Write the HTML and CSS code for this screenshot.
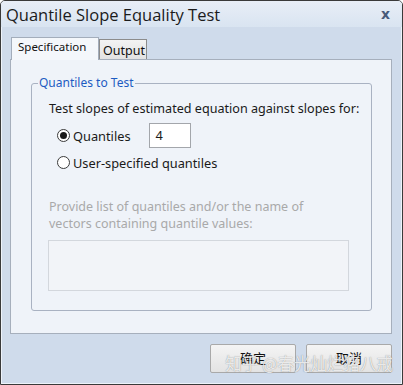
FILE: index.html
```html
<!DOCTYPE html>
<html>
<head lang="en">
    <meta charset="UTF-8">
    <title>Quantile Slope Equality Test</title>
    <link rel="stylesheet" href="styles.css">
</head>
<body>
    <div id="dialog">
        <div class="titlebar">
            <span class="title">Quantile Slope Equality Test</span>
            <span class="close">x</span>
        </div>
        <div class="body">
            <ul class="tabs">
                <li class="selected">Specification</li>
                <li>Output</li>
            </ul>
            <div class="panel">
                <div class="group">
                    <span class="legend">Quantiles to Test</span>
                    <p class="lead">Test slopes of estimated equation against slopes for:</p>
                    <div class="option">
                        <span class="radio checked"></span>
                        <span class="label">Quantiles</span>
                        <span class="field">4</span>
                    </div>
                    <div class="option">
                        <span class="radio"></span>
                        <span class="label">User-specified quantiles</span>
                    </div>
                    <p class="hint">Provide list of quantiles and/or the name of<br>vectors containing quantile values:</p>
                    <div class="area"></div>
                </div>
            </div>
            <div class="buttons">
                <span class="btn">确定</span>
                <span class="btn">取消</span>
            </div>
        </div>
        <span class="watermark">知乎 @春光灿烂猪八戒</span>
    </div>
</body>
</html>
```

FILE: styles.css
```css
*{
    padding: 0;
    margin: 0;
    box-sizing: border-box;
}
body{
    background: #ffffff;
    font-family: "Noto Sans", "Noto Sans CJK SC", sans-serif;
}
#dialog{
    width: 403px;
    height: 385px;
    position: relative;
    border: 1px solid #3a3a3a;
    border-radius: 5px 5px 0 0;
    background: #cfdbeb;
    box-shadow: inset 1px 0 0 #eef3fa, inset -1px -1px 0 #eef3fa;
    overflow: hidden;
}
.titlebar{
    height: 26px;
    display: flex;
    align-items: center;
    justify-content: space-between;
    padding: 0 12px 0 5px;
    background: linear-gradient(#e8eef7, #d9e4f1);
}
.title{
    font-family: "Open Sans", "Noto Sans", sans-serif;
    font-size: 16.5px;
    color: #1b1b1b;
}
.close{
    font-family: "DejaVu Sans", sans-serif;
    font-weight: bold;
    font-size: 14px;
    color: #485a7a;
}
.body{
    padding: 9px 10px 0 9px;
}
.tabs{
    display: flex;
    align-items: flex-end;
    height: 23px;
    list-style: none;
    padding-left: 1px;
}
.tabs li{
    height: 20px;
    width: 48px;
    padding: 0 3px;
    font-size: 12.5px;
    line-height: 21px;
    color: #111;
    border: 1px solid #8c8c8c;
    border-bottom: 0;
    background: linear-gradient(#f3f3f3, #e2e2e2);
}
.tabs li.selected{
    height: 23px;
    width: 88px;
    padding: 0 6px;
    line-height: 18px;
    font-size: 11.5px;
    border-color: #a3adbb;
    background: #f4f7fb;
    position: relative;
    top: 1px;
    z-index: 1;
}
.panel{
    height: 275px;
    border: 1px solid #a6afbc;
    background: #eff3f9;
    padding: 23px 19px 0 20px;
}
.group{
    position: relative;
    height: 228px;
    border: 1px solid #a9b2c2;
    border-radius: 3px;
    padding: 16px 0 0 17px;
}
.legend{
    position: absolute;
    left: 6px;
    top: -9px;
    padding: 0 1px;
    font-size: 12px;
    line-height: 16px;
    color: #1d5bc2;
    background: #eff3f9;
}
.lead{
    font-size: 12.6px;
    line-height: 18px;
    white-space: nowrap;
    color: #1a1a1a;
}
.option{
    display: flex;
    align-items: center;
    height: 27px;
    padding-left: 8px;
    font-size: 12.8px;
    color: #1a1a1a;
}
.option:first-of-type{
    margin-top: 4px;
}
.radio{
    width: 13px;
    height: 13px;
    border-radius: 50%;
    border: 1px solid #3b3b3b;
    background: #ffffff;
    margin-right: 3px;
    display: flex;
    align-items: center;
    justify-content: center;
}
.radio.checked::after{
    content: "";
    width: 7px;
    height: 7px;
    border-radius: 50%;
    background: #1a1a1a;
}
.field{
    width: 42px;
    height: 25px;
    margin-left: 18px;
    border: 1px solid #a3a6ab;
    background: #ffffff;
    padding-left: 6px;
    line-height: 23px;
}
.hint{
    margin-top: 22px;
    font-size: 12.5px;
    line-height: 17px;
    color: #a9a9a9;
}
.area{
    width: 301px;
    height: 51px;
    margin-top: 8px;
    margin-left: -1px;
    border: 1px solid #d3d7dd;
    background: #f2f4f8;
}
.buttons{
    display: flex;
    justify-content: flex-end;
    gap: 10px;
    padding-top: 10px;
}
.btn{
    width: 86px;
    height: 29px;
    border: 1px solid #a9a9a9;
    border-radius: 2px;
    background: linear-gradient(#f4f4f4, #e3e3e3);
    text-align: center;
    line-height: 27px;
    font-size: 13px;
    color: #111;
}
.watermark{
    position: absolute;
    right: 9px;
    bottom: 9px;
    font-family: "Noto Sans CJK SC", sans-serif;
    font-size: 16.5px;
    color: rgba(255, 255, 255, 0.82);
    text-shadow: 0 0 1px rgba(60, 60, 60, 0.6);
}
```
